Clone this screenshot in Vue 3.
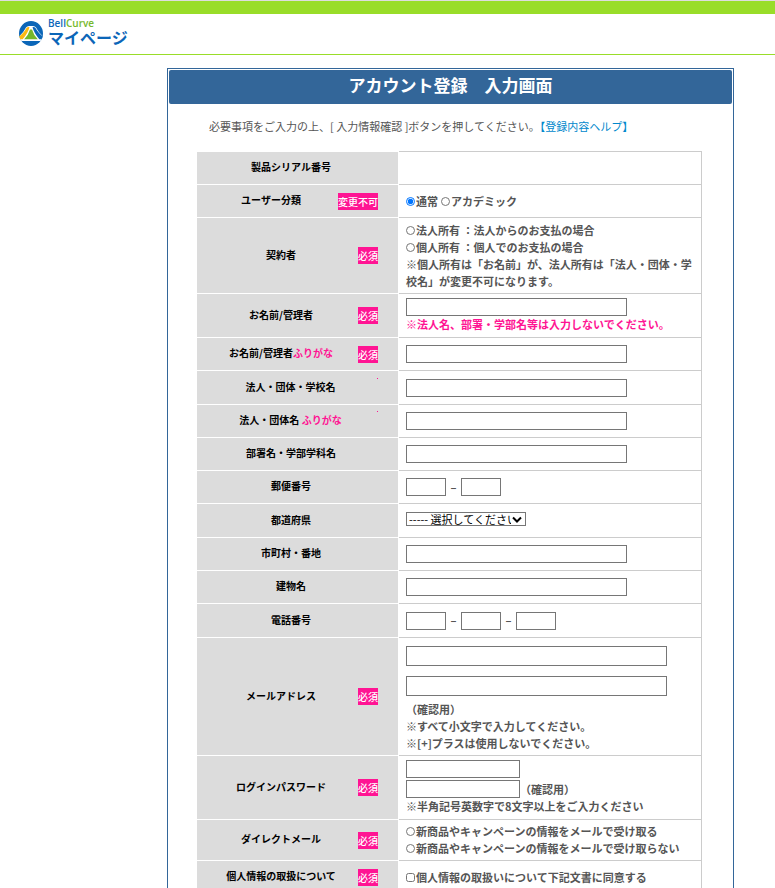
<script setup>
import { reactive } from 'vue'

const form = reactive({
  userType: 'normal',
  owner: '',
  name: '',
  nameKana: '',
  org: '',
  orgKana: '',
  dept: '',
  zip1: '',
  zip2: '',
  pref: '',
  city: '',
  building: '',
  tel1: '',
  tel2: '',
  tel3: '',
  mail: '',
  mailConfirm: '',
  password: '',
  passwordConfirm: '',
  dm: '',
  agree: false
})
</script>

<template>
  <div class="page">
    <header class="site-header">
      <a class="brand" href="#">
        <svg class="brand-mark" viewBox="0 0 24 25" aria-hidden="true">
          <defs>
            <clipPath id="disc"><ellipse cx="12" cy="12.5" rx="12" ry="12.5" /></clipPath>
          </defs>
          <g clip-path="url(#disc)">
            <rect width="24" height="25" fill="#0b66b8" />
            <path d="M-1 19 L1 14.500 Q4 12 7 6.500 Q8 5 10 5 L14 5 Q16 5 17 6.500 Q20 12 23 14.500 L25 19Z" fill="#fff" />
            <path d="M0 18.500 V15.500 Q4 13 7.500 7 Q8.500 5.800 10.500 6.200 Q9 12 3.500 18.500Z" fill="#fdb913" />
            <path d="M24 18.500 V15.500 Q20 13 16.500 7 Q15.500 5.800 13.500 6.200 Q15 12 20.500 18.500Z" fill="#0b66b8" />
            <path d="M5 18.500 Q9.500 14 11 8.500 H13 Q14.500 14 19 18.500Z" fill="#76b82a" />
            <rect y="18.500" width="24" height="1.500" fill="#fff" />
          </g>
        </svg>
        <span class="brand-text">
          <span class="brand-sub">Bell<span class="brand-green">Curve</span></span>
          <span class="brand-name">マイページ</span>
        </span>
      </a>
    </header>

    <main class="content">
      <section class="panel">
        <h1 class="title">アカウント登録　入力画面</h1>
        <p class="lead">必要事項をご入力の上、[ 入力情報確認 ]ボタンを押してください。<a href="#">【登録内容ヘルプ】</a></p>

        <form class="form">
          <table class="fields">
            <tbody>
              <tr>
                <th scope="row"><div class="head"><span class="label">製品シリアル番号</span></div></th>
                <td></td>
              </tr>
              <tr>
                <th scope="row"><div class="head"><span class="label">ユーザー分類</span><span class="badge">変更不可</span></div></th>
                <td>
                  <div class="options">
                    <label><input v-model="form.userType" type="radio" name="userType" value="normal">通常</label>
                    <label><input v-model="form.userType" type="radio" name="userType" value="academic">アカデミック</label>
                  </div>
                </td>
              </tr>
              <tr>
                <th scope="row"><div class="head"><span class="label">契約者</span><span class="badge">必須</span></div></th>
                <td class="terms">
                  <label class="line"><input v-model="form.owner" type="radio" name="owner" value="corp">法人所有 ：法人からのお支払の場合</label>
                  <label class="line"><input v-model="form.owner" type="radio" name="owner" value="person">個人所有 ：個人でのお支払の場合</label>
                  <p>※個人所有は「お名前」が、法人所有は「法人・団体・学校名」が変更不可になります。</p>
                </td>
              </tr>
              <tr>
                <th scope="row"><div class="head"><label class="label" for="name">お名前/管理者</label><span class="badge">必須</span></div></th>
                <td class="entry">
                  <input id="name" v-model="form.name" class="text" type="text">
                  <p class="warn">※法人名、部署・学部名等は入力しないでください。</p>
                </td>
              </tr>
              <tr>
                <th scope="row"><div class="head"><label class="label" for="nameKana">お名前/管理者<span class="kana">ふりがな</span></label><span class="badge">必須</span></div></th>
                <td><input id="nameKana" v-model="form.nameKana" class="text" type="text"></td>
              </tr>
              <tr class="roomy">
                <th scope="row"><div class="head"><label class="label" for="org">法人・団体・学校名</label><span class="dot"></span></div></th>
                <td><input id="org" v-model="form.org" class="text" type="text"></td>
              </tr>
              <tr>
                <th scope="row"><div class="head"><label class="label" for="orgKana">法人・団体名 <span class="kana">ふりがな</span></label><span class="dot"></span></div></th>
                <td><input id="orgKana" v-model="form.orgKana" class="text" type="text"></td>
              </tr>
              <tr>
                <th scope="row"><div class="head"><label class="label" for="dept">部署名・学部学科名</label></div></th>
                <td><input id="dept" v-model="form.dept" class="text" type="text"></td>
              </tr>
              <tr>
                <th scope="row"><div class="head"><label class="label" for="zip1">郵便番号</label></div></th>
                <td>
                  <div class="group">
                    <input id="zip1" v-model="form.zip1" class="text short" type="text"><span class="dash">–</span><input v-model="form.zip2" class="text short" type="text" aria-label="郵便番号">
                  </div>
                </td>
              </tr>
              <tr class="roomy">
                <th scope="row"><div class="head"><label class="label" for="pref">都道府県</label></div></th>
                <td class="select-cell">
                  <div class="select-box">
                    <select id="pref" v-model="form.pref" class="select">
                      <option value="">----- 選択してください -----</option>
                    </select>
                    <svg class="chevron" viewBox="0 0 10 7" aria-hidden="true"><path d="M1 1.500 L5 5.500 L9 1.500" fill="none" stroke="#000" stroke-width="2" /></svg>
                  </div>
                </td>
              </tr>
              <tr>
                <th scope="row"><div class="head"><label class="label" for="city">市町村・番地</label></div></th>
                <td><input id="city" v-model="form.city" class="text" type="text"></td>
              </tr>
              <tr>
                <th scope="row"><div class="head"><label class="label" for="building">建物名</label></div></th>
                <td><input id="building" v-model="form.building" class="text" type="text"></td>
              </tr>
              <tr class="roomy">
                <th scope="row"><div class="head"><label class="label" for="tel1">電話番号</label></div></th>
                <td>
                  <div class="group">
                    <input id="tel1" v-model="form.tel1" class="text short" type="text"><span class="dash">–</span><input v-model="form.tel2" class="text short" type="text" aria-label="電話番号"><span class="dash">–</span><input v-model="form.tel3" class="text short" type="text" aria-label="電話番号">
                  </div>
                </td>
              </tr>
              <tr>
                <th scope="row"><div class="head"><label class="label" for="mail">メールアドレス</label><span class="badge">必須</span></div></th>
                <td class="mail-cell">
                  <div class="mails">
                    <input id="mail" v-model="form.mail" class="text long" type="email">
                    <input id="mailConfirm" v-model="form.mailConfirm" class="text long" type="email">
                  </div>
                  <label class="line" for="mailConfirm">（確認用）</label>
                  <p>※すべて小文字で入力してください。</p>
                  <p>※[+]プラスは使用しないでください。</p>
                </td>
              </tr>
              <tr>
                <th scope="row"><div class="head"><label class="label" for="password">ログインパスワード</label><span class="badge">必須</span></div></th>
                <td class="entry">
                  <div class="passwords">
                    <input id="password" v-model="form.password" class="text medium" type="password">
                    <div class="group">
                      <input id="passwordConfirm" v-model="form.passwordConfirm" class="text medium" type="password"><label for="passwordConfirm">（確認用）</label>
                    </div>
                  </div>
                  <p>※半角記号英数字で8文字以上をご入力ください</p>
                </td>
              </tr>
              <tr>
                <th scope="row"><div class="head"><span class="label">ダイレクトメール</span><span class="badge">必須</span></div></th>
                <td>
                  <label class="line"><input v-model="form.dm" type="radio" name="dm" value="yes">新商品やキャンペーンの情報をメールで受け取る</label>
                  <label class="line"><input v-model="form.dm" type="radio" name="dm" value="no">新商品やキャンペーンの情報をメールで受け取らない</label>
                </td>
              </tr>
              <tr>
                <th scope="row"><div class="head"><span class="label">個人情報の取扱について</span><span class="badge">必須</span></div></th>
                <td>
                  <label class="line"><input v-model="form.agree" type="checkbox">個人情報の取扱いについて下記文書に同意する</label>
                </td>
              </tr>
            </tbody>
          </table>
        </form>
      </section>
    </main>
  </div>
</template>

<style>
body {
  margin: 0;
  background: #fff;
}
</style>

<style scoped>
.page {
  font-family: "Noto Sans CJK JP", "Noto Sans", sans-serif;
  font-size: 11px;
  line-height: 17px;
  color: #555;
  border-top: 1px solid #ddd;
}

.page * {
  box-sizing: border-box;
}

p {
  margin: 0;
}

.site-header {
  border-top: 13px solid #99dd29;
  border-bottom: 1px solid #99dd29;
  height: 54px;
  padding: 4px 19px;
}

.brand {
  display: inline-flex;
  align-items: flex-start;
  gap: 5px;
  text-decoration: none;
  color: #0b66b8;
}

.brand-mark {
  width: 24px;
  height: 25px;
  margin-top: 3px;
}

.brand-text {
  display: flex;
  flex-direction: column;
  font-weight: 700;
}

.brand-sub {
  font-family: "Open Sans", sans-serif;
  font-size: 10px;
  line-height: 11px;
  font-weight: 600;
}

.brand-green {
  color: #76b82a;
}

.brand-name {
  font-size: 16px;
  line-height: 17px;
}

.content {
  padding: 13px 41px 40px 167px;
}

.panel {
  border: 1px solid #336699;
  padding: 1px;
}

.title {
  margin: 0;
  padding-bottom: 4px;
  border-radius: 2px;
  background: #336699;
  color: #fff;
  font-size: 17px;
  line-height: 30px;
  font-weight: 700;
  text-align: center;
}

.lead {
  padding: 14px 0 16px 40px;
}

.lead a {
  color: #0088cc;
  text-decoration: none;
}

.form {
  padding: 0 30px 30px 28px;
}

.fields {
  width: 100%;
  border-collapse: separate;
  border-spacing: 0;
  table-layout: fixed;
}

tr {
  height: 33px;
}

.roomy {
  height: 34px;
}

th {
  width: 202px;
  padding: 0 20px 0 7px;
  background: #dcdcdc;
  border-top: 1px solid #fff;
  border-right: 1px solid #fff;
  color: #000;
  font-size: 10px;
  font-weight: 700;
}

td {
  padding: 3px 7px;
  border-top: 1px solid #ccc;
  border-right: 1px solid #ccc;
  font-weight: 700;
  vertical-align: middle;
}

.terms {
  padding-top: 4px;
}

.entry {
  padding: 4px 7px;
}

.head {
  display: flex;
  align-items: center;
}

.label {
  flex: 1;
  padding-bottom: 3px;
  text-align: center;
}

.kana,
.warn {
  color: #ff1493;
}

.badge {
  background: #ff1493;
  color: #fff;
  font-weight: 500;
}

.dot {
  align-self: flex-start;
  width: 1px;
  height: 1px;
  background: #ff1493;
}

.line {
  display: block;
}

.options {
  display: flex;
  gap: 3px;
}

input[type="radio"],
input[type="checkbox"] {
  width: 9px;
  height: 9px;
  margin: 0 1px 0 0;
}

.text {
  display: block;
  width: 221px;
  height: 18px;
  padding: 0 2px;
  border: 1px solid #767676;
  background: #fff;
  font: inherit;
}

.short {
  width: 40px;
}

.medium {
  width: 114px;
}

.long {
  width: 261px;
  height: 20px;
}

.group {
  display: flex;
  align-items: center;
}

.dash {
  width: 15px;
  text-align: center;
}

.select-cell {
  padding-bottom: 7px;
}

.select-box {
  position: relative;
  width: 120px;
}

.select {
  display: block;
  width: 100%;
  height: 14px;
  padding: 0 14px 0 2px;
  appearance: none;
  border: 1px solid #767676;
  border-radius: 0;
  background: #fff;
  color: #000;
  font-family: inherit;
  font-size: 11px;
  line-height: 12px;
}

.chevron {
  position: absolute;
  top: 4px;
  right: 4px;
  width: 10px;
  height: 7px;
  pointer-events: none;
}

.mail-cell {
  padding: 8px 7px 3px;
}

.mails {
  display: grid;
  gap: 10px;
  padding-bottom: 5px;
}

.passwords {
  display: grid;
  gap: 2px;
}
</style>
